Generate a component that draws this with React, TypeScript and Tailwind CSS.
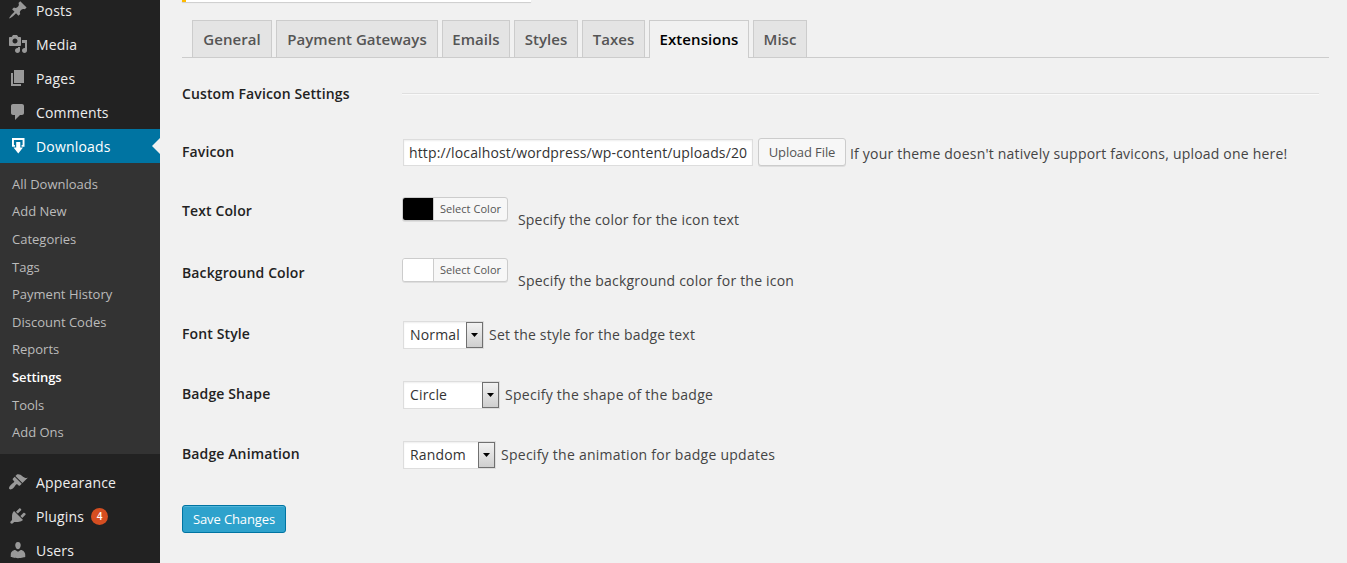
import type { ReactNode } from 'react';

const FONT = "font-['Open_Sans','Noto_Sans',sans-serif]";

const icons: Record<string, string> = {
  posts:
    'M10.44 3.02l1.82-1.82 6.36 6.35-1.83 1.82c-1.05-.68-2.48-.57-3.41.36l-.75.75c-.92.93-1.04 2.35-.35 3.41l-1.83 1.82-2.41-2.41-2.8 2.79c-.42.42-3.38 2.71-3.8 2.29s1.86-3.39 2.28-3.81l2.79-2.79L4.1 9.36l1.83-1.82c1.05.69 2.48.57 3.4-.36l.75-.75c.93-.92 1.05-2.35.36-3.41z',
  media:
    'M13 11V4c0-.55-.45-1-1-1h-1.67L9 1H5L3.67 3H2c-.55 0-1 .45-1 1v7c0 .55.45 1 1 1h10c.55 0 1-.45 1-1zM7 4.5c1.38 0 2.5 1.12 2.5 2.5S8.38 9.5 7 9.5 4.5 8.38 4.5 7 5.62 4.5 7 4.5zM14 6h5v10.5c0 1.38-1.12 2.5-2.5 2.5S14 17.88 14 16.5s1.12-2.5 2.5-2.5c.17 0 .34.02.5.05V9h-3V6zm-4 8.05V13h2v3.5c0 1.38-1.12 2.5-2.5 2.5S7 17.88 7 16.5 8.12 14 9.5 14c.17 0 .34.02.5.05z',
  pages: 'M6 15V2h10v13H6zm-1 1h8v2H3V5h2v11z',
  comments:
    'M5 2h9c1.1 0 2 .9 2 2v7c0 1.1-.9 2-2 2h-2l-5 5v-5H5c-1.1 0-2-.9-2-2V4c0-1.1.9-2 2-2z',
  downloads: 'M4 2h12.5v8.8h-2.9V8.9h1V4H5.9v4.9h1v1.9H4zM8.2 6h4.1v5.4h2.7L10.25 17.6 5.5 11.4h2.7z',
  appearance:
    'M14.48 11.06L7.41 3.99l1.5-1.5c.5-.56 2.3-.47 3.51.32 1.21.8 1.43 1.28 2.91 2.1 1.18.64 2.45 1.26 4.45.85zm-.71.71L6.7 4.7 4.93 6.47c-.39.39-.39 1.02 0 1.41l1.06 1.06c.39.39.39 1.03 0 1.42-.6.6-1.43 1.11-2.21 1.69-.35.26-.7.53-1.01.84C1.43 14.23.4 16.08 1.4 17.07c.99 1 2.84-.03 4.18-1.36.31-.31.58-.66.85-1.02.57-.78 1.08-1.61 1.69-2.21.39-.39 1.02-.39 1.41 0l1.06 1.06c.39.39 1.02.39 1.41 0z',
  plugins:
    'M13.11 4.36L9.87 7.6 8 5.73l3.24-3.24c.35-.34 1.05-.2 1.56.32.52.51.66 1.21.31 1.55zm-8 1.77l.91-1.12 9.01 9.01-1.19.84c-.71.71-2.63 1.16-3.82 1.16H6.14L4.9 17.26c-.59.59-1.54.59-2.12 0-.59-.58-.59-1.53 0-2.12l1.24-1.24v-3.88c0-1.13.4-3.19 1.09-3.89zm7.26 3.97l3.24-3.24c.34-.35 1.04-.21 1.55.31.52.51.66 1.21.31 1.55l-3.24 3.25z',
  users:
    'M10 9.25c-2.27 0-2.73-3.44-2.73-3.44C7 4.02 7.82 2 9.97 2c2.16 0 2.98 2.02 2.71 3.81 0 0-.41 3.44-2.68 3.44zm0 2.57L12.72 10c2.39 0 4.52 2.33 4.52 4.53v2.49s-3.65 1.13-7.24 1.13c-3.65 0-7.24-1.13-7.24-1.13v-2.49c0-2.25 1.94-4.48 4.47-4.48z',
};

function MenuItem({ icon, label, active, badge }: { icon: string; label: string; active?: boolean; badge?: string }) {
  return (
    <a
      className={`relative flex h-[34px] shrink-0 items-center pl-2 text-sm tracking-[0.18px] ${
        active ? 'bg-[#0074a2] text-white' : 'text-[#eee]'
      }`}
    >
      <svg viewBox="0 0 20 20" className={`mr-2 size-5 ${active ? 'fill-white' : 'fill-[#999]'}`}>
        <path d={icons[icon]} />
      </svg>
      <span className="pt-0.5">{label}</span>
      {badge && (
        <span className="ml-[7px] flex size-[17px] items-center justify-center rounded-full bg-[#d54e21] text-[10px] font-semibold tracking-normal text-white">
          {badge}
        </span>
      )}
      {active && (
        <span className="absolute top-[9px] right-0 border-y-8 border-r-8 border-y-transparent border-r-[#f1f1f1]" />
      )}
    </a>
  );
}

const submenu = [
  'All Downloads',
  'Add New',
  'Categories',
  'Tags',
  'Payment History',
  'Discount Codes',
  'Reports',
  'Settings',
  'Tools',
  'Add Ons',
];

const tabs = [
  { label: 'General', width: 'w-20' },
  { label: 'Payment Gateways', width: 'w-[162px]' },
  { label: 'Emails', width: 'w-[68px]' },
  { label: 'Styles', width: 'w-16' },
  { label: 'Taxes', width: 'w-[63px]' },
  { label: 'Extensions', width: 'w-[100px]' },
  { label: 'Misc', width: 'w-[54px]' },
];

function Row({
  label,
  height,
  labelOffset = '',
  children,
}: {
  label: string;
  height: string;
  labelOffset?: string;
  children: ReactNode;
}) {
  return (
    <div className={`flex items-start ${height}`}>
      <div
        className={`w-[220px] shrink-0 text-sm leading-[60px] font-semibold tracking-[0.12px] text-[#222] ${labelOffset}`}
      >
        {label}
      </div>
      {children}
    </div>
  );
}

function Hint({ className, children }: { className: string; children: ReactNode }) {
  return <span className={`text-sm leading-[60px] ${className}`}>{children}</span>;
}

function ColorButton({ swatch }: { swatch: string }) {
  return (
    <button className="mt-4 flex h-6 w-[106px] overflow-hidden rounded-[3px] border border-[#ccc] bg-[#f7f7f7] shadow-[0_1px_0_rgba(0,0,0,0.08)]">
      <span className={`h-full w-[30px] ${swatch}`} />
      <span className="h-full flex-1 border-l border-[#ccc] text-center text-[11px] leading-[22px] tracking-[0.05px] text-[#555]">
        Select Color
      </span>
    </button>
  );
}

function Select({ value, width }: { value: string; width: string }) {
  return (
    <div
      className={`mt-[17px] ml-px flex h-7 border border-[#ddd] bg-white pl-1.5 shadow-[inset_0_1px_2px_rgba(0,0,0,0.07)] ${width}`}
    >
      <span className="flex-1 text-sm leading-[26px] tracking-[0.15px] text-[#333]">{value}</span>
      <span className="flex h-[26px] w-[17px] items-center justify-center border border-[#707070] bg-linear-to-b from-[#f2f2f2] to-[#cfcfcf]">
        <svg viewBox="0 0 7 4" className="h-1 w-[7px] fill-black">
          <path d="M0 0h7L3.5 4z" />
        </svg>
      </span>
    </div>
  );
}

export default function App() {
  return (
    <div className={`flex h-[563px] w-[1347px] overflow-hidden bg-[#f1f1f1] text-[#444] ${FONT}`}>
      <nav className="-mt-[7px] flex w-40 shrink-0 flex-col bg-[#222]">
        <MenuItem icon="posts" label="Posts" />
        <MenuItem icon="media" label="Media" />
        <MenuItem icon="pages" label="Pages" />
        <MenuItem icon="comments" label="Comments" />
        <MenuItem icon="downloads" label="Downloads" active />
        <ul className="mb-[11px] h-[291px] shrink-0 bg-[#333] pt-[7.9px] pl-3 text-[13px]">
          {submenu.map((s) => (
            <li
              key={s}
              className={`h-[27.6px] leading-[27.6px] ${
                s === 'Settings' ? 'font-semibold tracking-[-0.1px] text-white' : 'text-[#bbb]'
              }`}
            >
              {s}
            </li>
          ))}
        </ul>
        <MenuItem icon="appearance" label="Appearance" />
        <MenuItem icon="plugins" label="Plugins" badge="4" />
        <MenuItem icon="users" label="Users" />
      </nav>

      <main className="flex flex-1 flex-col pr-[18px] pl-[22px]">
        <div className="h-0.5 w-[349px] shrink-0 border-l-4 border-[#ffba00] bg-white shadow-[0_1px_1px_rgba(0,0,0,0.15)]" />
        <div className="mt-[18px] flex h-[38px] shrink-0 gap-1 border-b border-[#ccc] pl-2.5 text-[15px] font-semibold tracking-[0.06px]">
          {tabs.map((t) => (
            <a
              key={t.label}
              className={`border border-b-0 border-[#ccc] text-center leading-9 whitespace-nowrap ${t.width} ${
                t.label === 'Extensions' ? '-mb-px bg-[#f1f1f1] text-black' : 'bg-[#e4e4e4] text-[#555]'
              }`}
            >
              {t.label}
            </a>
          ))}
        </div>

        <div className="flex flex-col pt-1.5">
          <Row label="Custom Favicon Settings" height="h-[58px]">
            <div className="mt-[29px] mr-2.5 h-0.5 flex-1 border-t border-[#dfdfdf] bg-[#f9f9f9]" />
          </Row>
          <Row label="Favicon" height="h-[59px]">
            <input
              readOnly
              value="http://localhost/wordpress/wp-content/uploads/20"
              className="mt-[17px] ml-px h-[27px] w-[350px] border border-[#ddd] bg-white px-[5px] text-sm tracking-[0.14px] text-[#333] shadow-[inset_0_1px_2px_rgba(0,0,0,0.07)] outline-none"
            />
            <button className="mt-4 ml-[5px] h-7 w-[88px] rounded-[3px] border border-[#ccc] bg-[#f7f7f7] text-[13px] leading-[26px] tracking-[-0.1px] text-[#555] shadow-[0_1px_0_rgba(0,0,0,0.08)]">
              Upload File
            </button>
            <Hint className="ml-1 pt-0.5 tracking-[0.2px]">
              If your theme doesn't natively support favicons, upload one here!
            </Hint>
          </Row>
          <Row label="Text Color" height="h-[61px]">
            <ColorButton swatch="bg-black" />
            <Hint className="ml-2.5 pt-[9px] tracking-[0.18px]">Specify the color for the icon text</Hint>
          </Row>
          <Row label="Background Color" height="h-[62px]" labelOffset="pt-px">
            <ColorButton swatch="bg-white" />
            <Hint className="ml-2.5 pt-[9px] tracking-[0.21px]">Specify the background color for the icon</Hint>
          </Row>
          <Row label="Font Style" height="h-[60px]">
            <Select value="Normal" width="w-[81px]" />
            <Hint className="ml-[5px] pt-px tracking-[0.2px]">Set the style for the badge text</Hint>
          </Row>
          <Row label="Badge Shape" height="h-[60px]">
            <Select value="Circle" width="w-[97px]" />
            <Hint className="ml-[5px] pt-px tracking-[0.27px]">Specify the shape of the badge</Hint>
          </Row>
          <Row label="Badge Animation" height="h-[60px]">
            <Select value="Random" width="w-[93px]" />
            <Hint className="ml-[5px] pt-px tracking-[0.26px]">Specify the animation for badge updates</Hint>
          </Row>
          <button className="mt-[21px] h-7 w-[104px] rounded-[3px] border border-[#0074a2] bg-[#2ea2cc] text-[13px] leading-[26px] tracking-[-0.1px] text-white shadow-[inset_0_1px_0_rgba(120,200,230,0.5)]">
            Save Changes
          </button>
        </div>
      </main>
    </div>
  );
}
